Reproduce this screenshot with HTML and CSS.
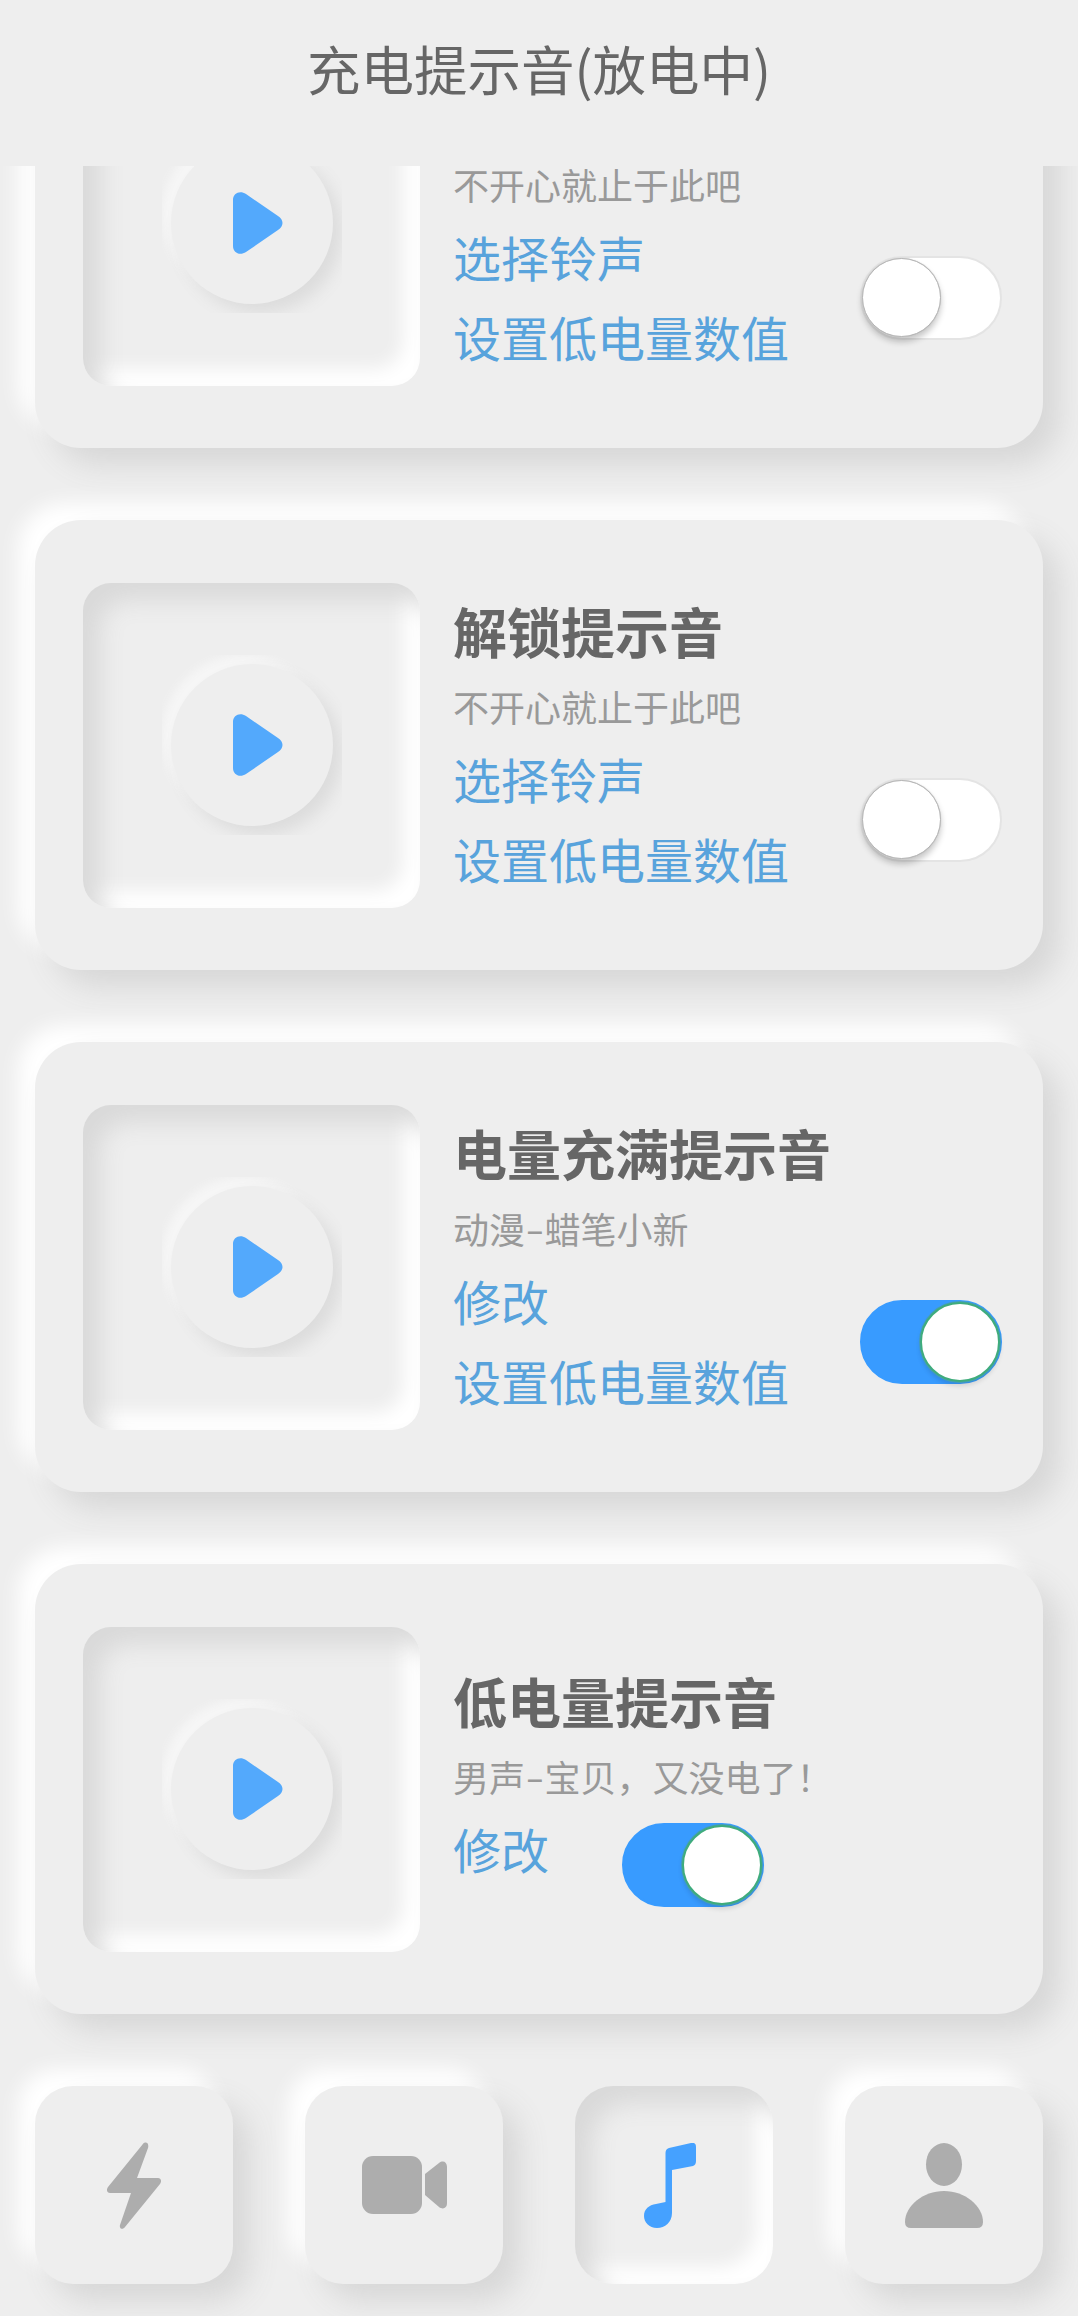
FILE: index.html
```html
<!DOCTYPE html>
<html lang="zh-CN">
<head>
<meta charset="utf-8">
<title>充电提示音</title>
<link rel="stylesheet" href="styles.css">
</head>
<body>
<svg class="defs" width="0" height="0">
  <symbol id="play" viewBox="0 0 50 62"><path d="M0 8C0 1 7-2 13 2L45 24C51 28 51 34 45 38L13 60C7 64 0 61 0 54Z"/></symbol>
</svg>
<header class="header"><h1>充电提示音(放电中)</h1></header>
<main class="list">
  <section class="card">
    <div class="cover"><div class="halo"><div class="disc"><svg class="play"><use href="#play"/></svg></div></div></div>
    <div class="info scrolled">
      <p>不开心就止于此吧</p>
      <a>选择铃声</a>
      <a>设置低电量数值</a>
    </div>
    <div class="switch side"><i></i></div>
  </section>
  <section class="card">
    <div class="cover"><div class="halo"><div class="disc"><svg class="play"><use href="#play"/></svg></div></div></div>
    <div class="info">
      <h2>解锁提示音</h2>
      <p>不开心就止于此吧</p>
      <a>选择铃声</a>
      <a>设置低电量数值</a>
    </div>
    <div class="switch side"><i></i></div>
  </section>
  <section class="card">
    <div class="cover"><div class="halo"><div class="disc"><svg class="play"><use href="#play"/></svg></div></div></div>
    <div class="info">
      <h2>电量充满提示音</h2>
      <p>动漫<span class="dash">-</span>蜡笔小新</p>
      <a>修改</a>
      <a>设置低电量数值</a>
    </div>
    <div class="switch on side"><i></i></div>
  </section>
  <section class="card">
    <div class="cover"><div class="halo"><div class="disc"><svg class="play"><use href="#play"/></svg></div></div></div>
    <div class="info">
      <h2>低电量提示音</h2>
      <p>男声<span class="dash">-</span>宝贝，又没电了！</p>
      <div class="row"><a>修改</a><div class="switch on"><i></i></div></div>
    </div>
  </section>
</main>
<nav class="tabs">
  <div class="tab"><svg width="54" height="87" viewBox="0 0 54 87"><path d="M35.500 2.500C38-1 42.500 0.500 41 6L30 36H51C54 36 55 39 53 42L18 85C16 88 12 87 13 83L24 51H3C0 51-1 48 1 45Z"/></svg></div>
  <div class="tab"><svg width="85" height="58" viewBox="0 0 85 58"><rect width="60" height="58" rx="11"/><path d="M63 18L77 7C81 4 85 6 85 11V47C85 52 81 54 77 51L63 39Z"/></svg></div>
  <div class="tab active"><svg width="60" height="85" viewBox="0 0 60 85"><path d="M21.500 10Q21.500 6 25 5L47 0Q52-1 52 4V18Q52 22 49 23L28 27V70C28 79 21 85 13 85C5 85 0 79 0 73C0 66 5 62 12 61L21.500 59Z"/></svg></div>
  <div class="tab"><svg width="78" height="85" viewBox="0 0 78 85"><ellipse cx="39" cy="21.5" rx="18" ry="21.5"/><path d="M6 85Q0 85 0 79C0 63 18 48 39 48S78 63 78 79Q78 85 72 85Z"/></svg></div>
</nav>
</body>
</html>
```
FILE: styles.css
```css
* { box-sizing: border-box; }
body {
  margin: 0;
  width: 1078px;
  height: 2316px;
  overflow: hidden;
  background: #eee;
  color: #666;
  font-family: "Noto Sans CJK SC", sans-serif;
}
h1, h2, p { margin: 0; }
.defs { display: block; height: 0; }

.header { height: 166px; padding-top: 28px; }
.header h1 {
  font-size: 53.5px;
  font-weight: 400;
  line-height: 80px;
  text-align: center;
}

.list {
  height: 1920px;
  overflow: hidden;
  padding: 0 35px;
}
.card {
  display: flex;
  align-items: center;
  height: 450px;
  margin-bottom: 72px;
  padding-left: 48px;
  border-radius: 46px;
  background: #eee;
  box-shadow: 17px 17px 30px #d7d7d7, -17px -17px 20px #fff;
}
.card:first-child { margin-top: -168px; }

.cover {
  display: flex;
  align-items: center;
  justify-content: center;
  flex: none;
  width: 337px;
  height: 325px;
  border-radius: 28px;
  box-shadow: inset 17px 17px 24px #d9d9d9, inset -17px -17px 18px #fff;
}
.halo {
  padding: 9px;
  overflow: hidden;
}
.disc {
  display: flex;
  align-items: center;
  width: 162px;
  height: 162px;
  padding-left: 62px;
  border-radius: 50%;
  background: #eee;
  box-shadow: 9px 9px 16px #dcdcdc, -9px -9px 8px #f6f6f6;
}
.play { width: 50px; height: 62px; margin-top: -1px; fill: #53a9fc; }

.info { width: 407px; margin: -4px 0 0 33px; }
.info.scrolled { padding-top: 86px; }
.info h2 {
  font-size: 54px;
  font-weight: 700;
  line-height: 86px;
}
.info p {
  padding-top: 1px;
  font-size: 36px;
  line-height: 63px;
  color: #999;
  white-space: nowrap;
}
.info a {
  display: block;
  font-size: 48px;
  line-height: 80px;
  color: #58a3dc;
}
.dash {
  display: inline-block;
  width: 19.5px;
  text-align: center;
  transform: translateY(-1px) scaleX(1.5);
}
.row { display: flex; height: 109px; }
.row .switch { margin: 15px 0 0 73px; }

.switch {
  flex: none;
  width: 142px;
  height: 84px;
  padding: 2px;
  border: 2px solid #e4e4e4;
  border-radius: 42px;
  background: #fff;
}
.switch i {
  display: block;
  width: 79px;
  height: 79px;
  margin: -2px 0 0 -2px;
  border: 1.5px solid #b5b5b5;
  border-radius: 50%;
  background: #fff;
  box-shadow: 0 0 1px #bbb, 0 5px 6px rgba(0, 0, 0, .22);
}
.switch.side { align-self: flex-start; margin-top: 258px; }
.switch.on { border-color: #389bff; background: #389bff; }
.switch.on i {
  width: 80px;
  height: 80px;
  margin-left: 56px;
  border: 2px solid #3fac7c;
  box-shadow: 0 0 0 1px #459fb4, 0 4px 5px rgba(0, 0, 0, .12);
}

.tabs {
  display: flex;
  justify-content: space-between;
  padding: 0 35px;
}
.tab {
  display: flex;
  align-items: center;
  justify-content: center;
  width: 198px;
  height: 198px;
  border-radius: 38px;
  background: #eee;
  fill: #adadad;
  box-shadow: 17px 17px 30px #d7d7d7, -17px -17px 20px #fff;
}
.tab.active {
  fill: #45a1ff;
  box-shadow: inset 17px 17px 24px #d9d9d9, inset -17px -17px 18px #fff;
}
```
